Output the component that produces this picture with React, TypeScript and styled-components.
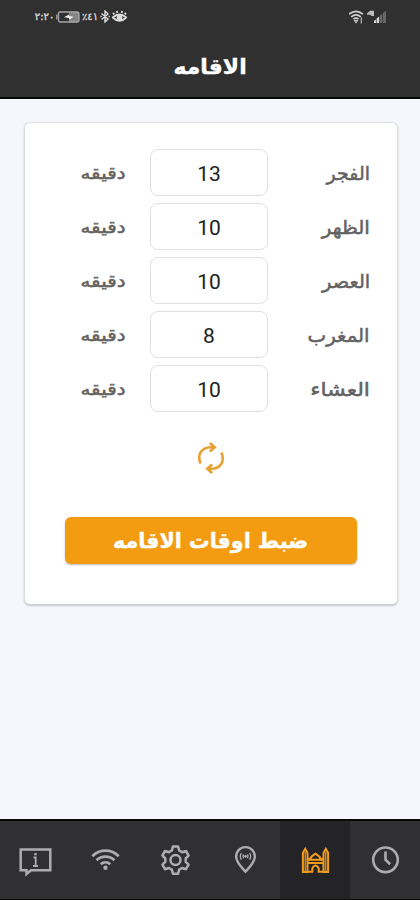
import React from 'react';
import styled, { createGlobalStyle } from 'styled-components';

const GlobalStyle = createGlobalStyle`
  * { box-sizing: border-box; }
  html, body { margin: 0; padding: 0; background: #f5f7fc; }
  body { font-family: 'DejaVu Sans', 'Noto Sans', sans-serif; }
`;

const Screen = styled.div`
  width: 420px;
  height: 900px;
  display: flex;
  flex-direction: column;
  overflow: hidden;
  background: #f5f7fc;
`;

const Header = styled.header`
  height: 99px;
  flex: none;
  background: #303030;
  border-bottom: 2px solid #090909;
`;

const StatusBar = styled.div`
  height: 33px;
  display: flex;
  justify-content: space-between;
  align-items: center;
  padding: 0 33px 0 35px;
  color: #d4d4d4;
`;

const StatusGroup = styled.div`
  display: flex;
  align-items: center;
  gap: 2px;
`;

const StatusText = styled.span<{ $width: number }>`
  width: ${(p) => p.$width}px;
  font-size: 10px;
  line-height: 12px;
  letter-spacing: -0.6px;
  white-space: nowrap;
  display: flex;
  justify-content: center;
  -webkit-text-stroke: 0.4px currentColor;
`;

const TitleBar = styled.div`
  height: 64px;
  display: flex;
  align-items: center;
  justify-content: center;
`;

const FitText = styled.span<{ $size: number; $scale?: number; $bold?: boolean; $origin?: string }>`
  display: inline-block;
  font-size: ${(p) => p.$size}px;
  font-weight: ${(p) => (p.$bold ? 700 : 400)};
  line-height: 30px;
  white-space: nowrap;
  -webkit-text-stroke: ${(p) => (p.$bold ? 0.4 : 0.5)}px currentColor;
  transform: scaleX(${(p) => p.$scale ?? 1});
  transform-origin: ${(p) => p.$origin ?? 'center'};
`;

const Title = styled.h1`
  margin: 0;
  color: #fff;
  line-height: 30px;
`;

const Main = styled.main`
  flex: 1;
  padding: 23px 22px 0 24px;
`;

const Card = styled.section`
  height: 483px;
  background: #fff;
  border: 1px solid #dcdee1;
  border-bottom-color: #cfd0d3;
  border-radius: 6px;
  box-shadow: 0 1px 2px rgba(0, 0, 0, 0.2);
  display: flex;
  flex-direction: column;
  align-items: center;
  padding-top: 26px;
`;

const TimeList = styled.div`
  width: 100%;
  display: flex;
  flex-direction: column;
  gap: 7px;
`;

const TimeRow = styled.label`
  direction: rtl;
  display: grid;
  grid-template-columns: 102px 118px 1fr;
  align-items: center;
  height: 47px;
  padding: 0 27px 0 0;
  color: #626262;
`;

const MinuteInput = styled.input`
  width: 118px;
  height: 47px;
  border: 1px solid #e0e0e0;
  border-radius: 8px;
  background: #fff;
  color: #222;
  text-align: center;
  font: 400 21px Roboto, sans-serif;
  padding: 2px 0 0;
  outline: none;
`;

const Unit = styled.span`
  padding-right: 24px;
`;

const RefreshButton = styled.button`
  width: 40px;
  height: 40px;
  margin: 26px 0 0;
  padding: 0;
  border: 0;
  background: none;
  color: #e7a130;
  display: grid;
  place-items: center;
`;

const SubmitButton = styled.button`
  width: 292px;
  height: 47px;
  margin: 39px 0 0;
  padding: 0;
  border: 0;
  border-radius: 6px;
  background: #f39c12;
  box-shadow: 0 1px 2px rgba(0, 0, 0, 0.28);
  color: #fff;
  font-family: inherit;
`;

const Nav = styled.nav`
  height: 81px;
  flex: none;
  display: grid;
  grid-template-columns: repeat(6, 1fr);
  border-top: 2px solid #09090a;
  border-bottom: 1px solid #0c0c0c;
  background: #303032;
`;

const NavItem = styled.button<{ $active?: boolean }>`
  border: 0;
  padding: 0 0 1px;
  background: ${(p) => (p.$active ? '#242426' : 'transparent')};
  color: ${(p) => (p.$active ? '#f39c1c' : '#adadae')};
  display: grid;
  place-items: center;
`;

const Line = ({ width = 2, children }: { width?: number; children: React.ReactNode }) => (
  <svg width="32" height="32" viewBox="-0.5 0 32 32" overflow="visible" fill="none" stroke="currentColor" strokeWidth={width}>
    {children}
  </svg>
);

const InfoIcon = () => (
  <Line>
    <path d="M1.2 5.6H30.8V26.2H11.5L7 30V26.2H1.2Z" strokeWidth="2.5" />
    <path d="M14 13.5H16.2V22M13.5 22H18.5" strokeWidth="1.8" />
    <path d="M16 9V11.3" strokeWidth="2.4" />
  </Line>
);

const WifiIcon = () => (
  <Line>
    <path d="M2.8 12.2C10.3 4.8 21.7 4.8 29.2 12.2M7 16.3C12.2 11.4 19.8 11.4 25 16.3M11.2 20.3C14.1 17.6 17.9 17.6 20.8 20.3" strokeWidth="2.7" />
    <circle cx="16" cy="23.8" r="2.2" fill="currentColor" stroke="none" />
  </Line>
);

const GearIcon = () => (
  <Line>
    <path d="M13.4 2.5H18.6L19.6 6.5L22.6 8.2L26.5 7L29.1 11.5L26.2 14.4V17.8L29.1 20.7L26.5 25.2L22.6 24L19.6 25.7L18.6 29.7H13.4L12.4 25.7L9.4 24L5.5 25.2L2.9 20.7L5.8 17.8V14.4L2.9 11.5L5.5 7L9.4 8.2L12.4 6.5Z" strokeWidth="2.5" strokeLinejoin="round" />
    <circle cx="16" cy="16.1" r="5" strokeWidth="2.5" />
  </Line>
);

const PinIcon = () => (
  <Line>
    <path d="M16 27.7C11.7 22.9 6.6 18.2 6.6 12.5A9.4 9.4 0 0 1 25.4 12.5C25.4 18.2 20.3 22.9 16 27.7Z" strokeWidth="2.4" />
    <path d="M11.9 9Q9.8 12.3 11.9 15.6M20.1 9Q22.2 12.3 20.1 15.6M14 10.4Q13 12.3 14 14.2M18 10.4Q19 12.3 18 14.2" strokeWidth="1.3" />
    <circle cx="16" cy="12.3" r="1.4" fill="currentColor" stroke="none" />
  </Line>
);

const MosqueIcon = () => (
  <Line width={2}>
    <path d="M3.4 28V9L5.7 4.8L8 9V28ZM24 28V9L26.3 4.8L28.6 9V28Z" />
    <path d="M5.7 8V28M26.3 8V28" strokeWidth="1.2" />
    <path d="M8 19H24M8 27.7H12.8V24.5Q13.2 22.4 16 21.4Q18.8 22.4 19.2 24.5V27.7H24M10 15.8Q11.5 12.2 16 9.6Q20.5 12.2 22 15.8ZM8 14.6L10.4 16.5M24 14.6L21.6 16.5" />
  </Line>
);

const ClockIcon = () => (
  <Line>
    <circle cx="16" cy="15.8" r="12.3" strokeWidth="2.6" />
    <path d="M16 7.6V15.8L20.6 20.3" strokeWidth="2.6" />
  </Line>
);

const RefreshIcon = () => (
  <svg width="28" height="34" viewBox="0 0 28 34" fill="none" stroke="currentColor" strokeWidth="2.6">
    <path d="M3.6 22.4C-.2 13.5 4.5 6.4 13.5 6.2H17.5M12.8 1.9L17.8 6.2L12.8 10.6" />
    <path d="M24.4 11.6C28.2 20.5 23.5 27.6 14.5 27.8H10.5M15.2 32.1L10.2 27.8L15.2 23.4" />
  </svg>
);

const BatteryIcon = () => (
  <svg width="24" height="12" viewBox="0 0 24 12" fill="none">
    <path d="M13 .8H21Q23 .8 23 2.8V9.2Q23 11.2 21 11.2H13Z" fill="#858585" />
    <path d="M4 1H21Q23 1 23 3V9Q23 11 21 11H4Q2.5 11 2.5 9V3Q2.5 1 4 1ZM.8 3.5V8.5" stroke="#a5a5a5" strokeWidth="1.3" />
    <path d="M8 6.2L13 3.4V5.1L17.5 5.7L13 8.8V7Z" fill="#eee" />
  </svg>
);

const BluetoothIcon = () => (
  <svg width="10" height="13" viewBox="0 0 10 13" fill="none" stroke="#dadada" strokeWidth="1.4">
    <path d="M1.5 3.5L8 9L5 12V1L8 4L1.5 9.5M.3 6.5H1.7M8.5 6.5H9.8" />
  </svg>
);

const EyeIcon = () => (
  <svg width="15" height="13" viewBox="0 0 15 13" fill="none" stroke="#dcdcdc" strokeWidth="1.8">
    <path d="M.8 7.5Q7.5 1.5 14.2 7.5Q7.5 14.2 .8 7.5ZM2.2 4.5L1.2 2.7M5.3 3L4.8 1M9.7 3L10.2 1M12.8 4.5L13.8 2.7" />
    <circle cx="7.5" cy="7.8" r="2" fill="#dcdcdc" />
  </svg>
);

const SmallWifiIcon = () => (
  <svg width="16" height="14" viewBox="0 0 16 14" fill="none" stroke="#d0d0d0" strokeWidth="1.7">
    <path d="M0 4.2Q7-1.5 14 4.2M2.2 6.8Q7 2.8 11.8 6.8M4.4 9.2Q7 7 9.6 9.2" />
    <path d="M5.5 10.5H8.5L7 12.8ZM12.3 7.5V13.5" stroke="#c0c0c0" strokeWidth="1.1" />
  </svg>
);

const SignalIcon = () => (
  <svg width="20" height="14" viewBox="0 0 20 14">
    <path d="M0 3.4L3 .8H7V6H4.4L3.4 4.8H0Z" fill="#bcbcbc" />
    <path d="M7 13V11L9 9.5V13ZM9.6 13V8.5L12.2 6.5V13Z" fill="#dadada" />
    <path d="M13 13V5.5L15.4 3.8V13ZM16 13V3L19 .8V13Z" fill="#666" />
  </svg>
);

const prayers = [
  { name: 'الفجر', minutes: 13, scale: 1 },
  { name: 'الظهر', minutes: 10, scale: 1.05 },
  { name: 'العصر', minutes: 10, scale: 1.02 },
  { name: 'المغرب', minutes: 8, scale: 1.04 },
  { name: 'العشاء', minutes: 10, scale: 1.15 },
];

const tabs = [
  { id: 'info', Icon: InfoIcon },
  { id: 'wifi', Icon: WifiIcon },
  { id: 'settings', Icon: GearIcon },
  { id: 'location', Icon: PinIcon },
  { id: 'mosque', Icon: MosqueIcon, active: true },
  { id: 'clock', Icon: ClockIcon },
];

export default function App() {
  return (
    <Screen>
      <GlobalStyle />
      <Header>
        <StatusBar>
          <StatusGroup>
            <StatusText $width={19}>٢:٢٠</StatusText>
            <BatteryIcon />
            <StatusText $width={16}>٪٤١</StatusText>
            <BluetoothIcon />
            <EyeIcon />
          </StatusGroup>
          <StatusGroup>
            <SmallWifiIcon />
            <SignalIcon />
          </StatusGroup>
        </StatusBar>
        <TitleBar>
          <Title><FitText $size={21} $scale={1.04} $bold>الاقامه</FitText></Title>
        </TitleBar>
      </Header>
      <Main>
        <Card>
          <TimeList>
            {prayers.map((p) => (
              <TimeRow key={p.name}>
                <span><FitText $size={19} $scale={p.scale} $origin="right">{p.name}</FitText></span>
                <MinuteInput defaultValue={p.minutes} />
                <Unit><FitText $size={17} $scale={1.17} $origin="right">دقيقه</FitText></Unit>
              </TimeRow>
            ))}
          </TimeList>
          <RefreshButton aria-label="تحديث"><RefreshIcon /></RefreshButton>
          <SubmitButton><FitText $size={21} $scale={0.98} $bold>ضبط اوقات الاقامه</FitText></SubmitButton>
        </Card>
      </Main>
      <Nav>
        {tabs.map(({ id, Icon, active }) => (
          <NavItem key={id} $active={active}><Icon /></NavItem>
        ))}
      </Nav>
    </Screen>
  );
}
